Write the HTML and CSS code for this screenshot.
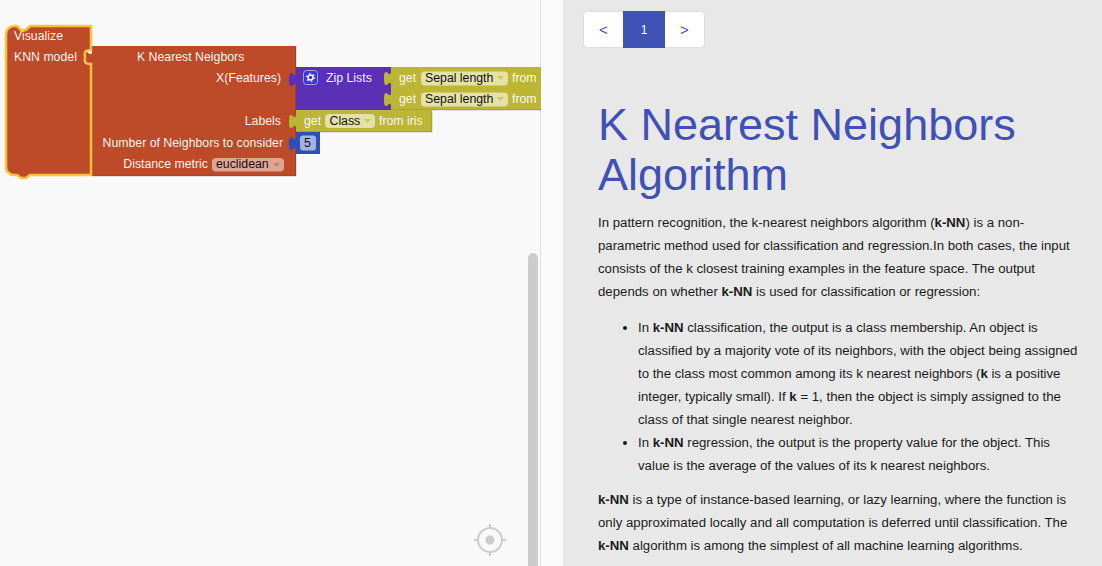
FILE: index.html
```html
<!DOCTYPE html>
<html lang="en">
<head>
    <meta charset="UTF-8">
    <title>K Nearest Neighbors</title>
    <link rel="stylesheet" href="styles.css">
</head>
<body>
    <div class="workspace">
        <svg class="blocks" width="540" height="566" viewBox="0 0 540 566">
            <!-- knn block -->
            <path class="red" d="M92 46 H296 V176 H92 V66 c0 -10 -8 8 -8 -7.500 s8 2.500 8 -7.500 z"/>
            <path class="edge" d="M296 47 V176 H92"/>
            <text class="lbl" x="137" y="61">K Nearest Neigbors</text>
            <text class="lbl end" x="281" y="82">X(Features)</text>
            <text class="lbl end" x="281" y="125">Labels</text>
            <text class="lbl end" x="283" y="147">Number of Neighbors to consider</text>
            <text class="lbl end" x="208" y="168">Distance metric</text>
            <rect class="field-red" x="212" y="158" width="72" height="13.500" rx="4"/>
            <text class="val" x="216" y="168">euclidean</text>
            <path class="arrow-red" d="M273 163 h7 l-3.500 4 z"/>

            <!-- zip lists -->
            <path class="purple" d="M296 67 H391 V110 H296 V87 c0 -10 -7 8 -7 -7.500 s7 2.500 7 -7.500 z"/>
            <rect class="mutator" x="303.500" y="70.500" width="14" height="14" rx="3"/>
            <circle class="gear-teeth" cx="310.500" cy="77.500" r="4"/>
            <circle class="gear" cx="310.500" cy="77.500" r="2.500"/>
            <text class="lbl" x="326" y="82">Zip Lists</text>

            <!-- get from -->
            <path class="olive" d="M391 67 H541 V88 H391 V86 c0 -10 -7 8 -7 -7.500 s7 2.500 7 -7.500 z"/>
            <text class="lbl" x="399" y="82">get</text>
            <rect class="field-olive" x="421" y="71.500" width="87" height="14" rx="4"/>
            <text class="val" x="425" y="82">Sepal length</text>
            <path class="arrow-olive" d="M497 76 h7 l-3.500 4 z"/>
            <text class="lbl" x="512" y="82">from</text>

            <path class="olive" d="M391 88 H541 V110 H391 V107 c0 -10 -7 8 -7 -7.500 s7 2.500 7 -7.500 z"/>
            <path class="edge" d="M391 110 H541"/>
            <text class="lbl" x="399" y="103">get</text>
            <rect class="field-olive" x="421" y="92.500" width="87" height="14" rx="4"/>
            <text class="val" x="425" y="103">Sepal length</text>
            <path class="arrow-olive" d="M497 97 h7 l-3.500 4 z"/>
            <text class="lbl" x="512" y="103">from</text>

            <!-- labels -->
            <path class="olive" d="M296 110 H432 V132 H296 V129 c0 -10 -7 8 -7 -7.500 s7 2.500 7 -7.500 z"/>
            <path class="edge" d="M432 111 V132 H296"/>
            <text class="lbl" x="304" y="125">get</text>
            <rect class="field-olive" x="325" y="114" width="50" height="14" rx="4"/>
            <text class="val" x="329.500" y="125">Class</text>
            <path class="arrow-olive" d="M364 119 h7 l-3.500 4 z"/>
            <text class="lbl" x="379" y="125">from iris</text>

            <!-- number -->
            <path class="blue" d="M296 132 H320 V154 H296 V151 c0 -10 -7 8 -7 -7.500 s7 2.500 7 -7.500 z"/>
            <rect class="field-blue" x="300" y="135.500" width="16" height="15" rx="3"/>
            <text class="val" x="304" y="147">5</text>

            <!-- visualize, selected -->
            <path class="red selected" d="M6 34 a8 8 0 0 1 8 -8 h3 l4 4 h5 l4 -4 H91 V50 h-1 c-7 0 -5 5 -5 7 s-2 7 5 7 h1 V175 H30 l-4 3 h-5 l-4 -3 h-3 a8 8 0 0 1 -8 -8 z"/>
            <text class="lbl" x="14" y="40">Visualize</text>
            <text class="lbl" x="14" y="61">KNN model</text>

            <!-- centre control -->
            <g class="target">
                <circle cx="490" cy="540" r="12"/>
                <path d="M490 524 v4 M490 552 v4 M474 540 h4 M502 540 h4"/>
            </g>
            <circle class="target-dot" cx="490" cy="540" r="4.500"/>
        </svg>
        <div class="scrollbar"></div>
    </div>
    <div class="gutter"></div>
    <div class="content">
        <div class="pager">
            <a class="page">&lt;</a>
            <a class="page on">1</a>
            <a class="page">&gt;</a>
        </div>
        <h1>K Nearest Neighbors Algorithm</h1>
        <p>In pattern recognition, the k-nearest neighbors algorithm (<b>k-NN</b>) is a non-parametric method used for classification and regression.In both cases, the input consists of the k closest training examples in the feature space. The output depends on whether <b>k-NN</b> is used for classification or regression:</p>
        <ul>
            <li>In <b>k-NN</b> classification, the output is a class membership. An object is classified by a majority vote of its neighbors, with the object being assigned to the class most common among its k nearest neighbors (<b>k</b> is a positive integer, typically small). If <b>k</b> = 1, then the object is simply assigned to the class of that single nearest neighbor.</li>
            <li>In <b>k-NN</b> regression, the output is the property value for the object. This value is the average of the values of its k nearest neighbors.</li>
        </ul>
        <p><b>k-NN</b> is a type of instance-based learning, or lazy learning, where the function is only approximated locally and all computation is deferred until classification. The <b>k-NN</b> algorithm is among the simplest of all machine learning algorithms.</p>
    </div>
</body>
</html>
```

FILE: styles.css
```css
* {
    box-sizing: border-box;
}
html, body {
    height: 100%;
    margin: 0;
}
body {
    display: flex;
    overflow: hidden;
    background: #fafafa;
    font-family: "Liberation Sans", Arial, sans-serif;
}

/* blockly side */
.workspace {
    position: relative;
    flex: none;
    width: 541px;
    height: 566px;
    background: #f9f9f9;
    border-right: 1px solid #ddd;
}
.blocks {
    display: block;
    overflow: visible;
}
.red { fill: #bd4b2a; }
.purple { fill: #5b30b5; }
.olive { fill: #bdb534; }
.blue { fill: #2c50b8; }
.edge {
    fill: none;
    stroke: #000;
    stroke-opacity: .2;
}
.selected {
    stroke: #fbc23e;
    stroke-width: 2.5;
}
.lbl, .val {
    font-size: 12.3px;
}
.lbl { fill: #fff; fill-opacity: .95; }
.val { fill: #111; }
.end { text-anchor: end; }
.field-red { fill: #dfa594; }
.field-olive { fill: #e4e1a6; }
.field-blue { fill: #a4b2e2; }
.arrow-red { fill: #c9705a; fill-opacity: .8; }
.arrow-olive { fill: #bdb534; fill-opacity: .6; }
.mutator {
    fill: #3a35e0;
    stroke: #a9a0e8;
}
.gear {
    fill: none;
    stroke: #fff;
    stroke-width: 1.500;
}
.gear-teeth {
    fill: none;
    stroke: #dcdcff;
    stroke-width: 1.500;
    stroke-dasharray: 1.600 2.600;
}
.target circle, .target path {
    fill: none;
    stroke: #ccc;
    stroke-width: 2;
}
.target-dot { fill: #ccc; }
.scrollbar {
    position: absolute;
    left: 528px;
    top: 253px;
    bottom: 0;
    width: 10px;
    background: #ccc;
    border-radius: 5px 5px 0 0;
}

.gutter {
    flex: none;
    width: 22px;
    background: #fafafa;
}

/* article side */
.content {
    flex: 1;
    min-width: 0;
    height: 566px;
    overflow: hidden;
    padding: 11px 21px 0 35px;
    background: #e8e8e8;
    color: #1a1a1a;
}
.pager {
    display: flex;
    width: 122px;
    height: 37px;
    margin-left: -15px;
    background: #fff;
    border: 1px solid #ddd;
    border-radius: 4px;
}
.page {
    display: flex;
    align-items: center;
    justify-content: center;
    width: 39px;
    color: #3f51b5;
    font-size: 15px;
}
.page.on {
    width: 42px;
    margin: -1px 0;
    background: #3f51b5;
    color: #fff;
    font-size: 12px;
}
h1 {
    margin: 52px 0 11px;
    color: #3f51b5;
    font-size: 45px;
    font-weight: normal;
    line-height: 50px;
}
p, ul {
    font-size: 13.22px;
    line-height: 23px;
}
p {
    margin: 0;
}
ul {
    margin: 13px 0 11px;
    padding-left: 40px;
}
```
